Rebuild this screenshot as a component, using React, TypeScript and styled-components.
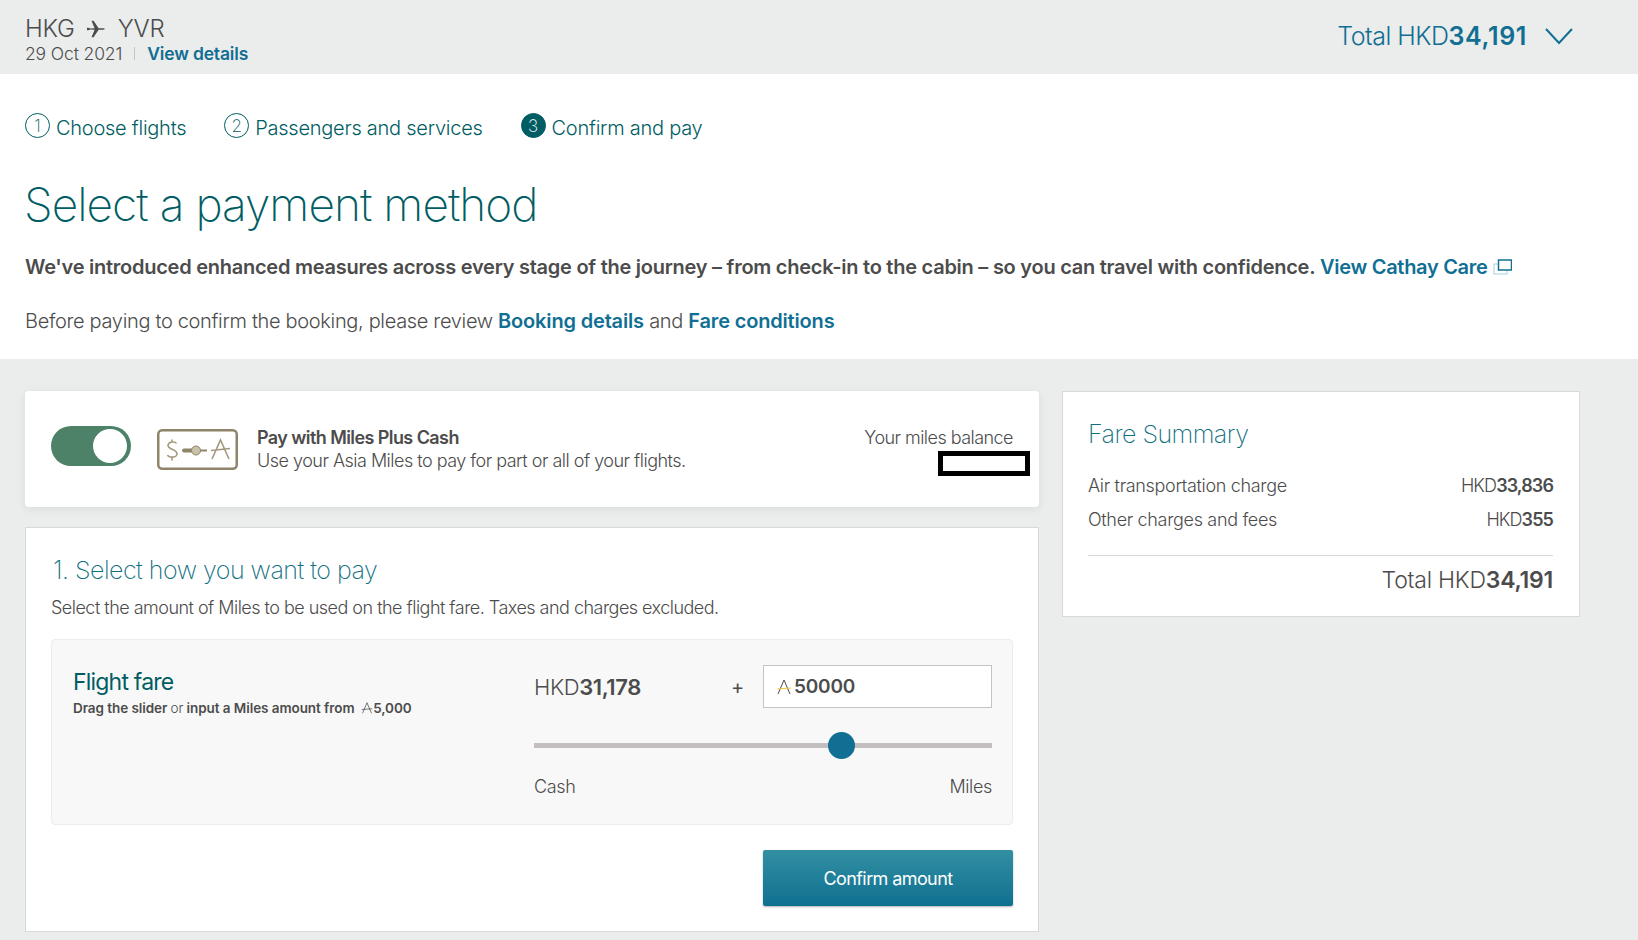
import React from 'react'
import styled, { createGlobalStyle } from 'styled-components'

const GlobalStyle = createGlobalStyle`
  html, body { margin: 0; padding: 0; background: #ebecec; }
  body { font-family: "Inter", "Liberation Sans", sans-serif; color: #4c4c4c; }
  * { box-sizing: border-box; }
`

const Page = styled.div`
  width: 1638px;
  height: 940px;
  overflow: hidden;
  background: #ebecec;
`

const TopBar = styled.header`
  height: 74px;
  padding: 15px 65px 0 25px;
  display: flex;
  justify-content: space-between;
  background: #ebecec;
`

const Route = styled.div`
  display: flex;
  align-items: center;
  gap: 11.5px;
  height: 27px;
  font-size: 24px;
  font-weight: 300;
  letter-spacing: -0.2px;
`

const DateRow = styled.div`
  display: flex;
  align-items: center;
  margin-top: 1px;
  font-size: 17.5px;
  font-weight: 300;
  letter-spacing: -0.12px;
`

const Pipe = styled.span`
  width: 1px;
  height: 13px;
  margin: 0 12px;
  background: #c4c4c4;
`

const Link = styled.a`
  color: #106f93;
  font-weight: 600;
  letter-spacing: -0.17px;
`

const TotalToggle = styled.div`
  display: flex;
  align-items: center;
  gap: 18px;
  height: 42px;
  color: #106f93;
  font-size: 25px;
  font-weight: 300;
  letter-spacing: -0.5px;
  b { font-weight: 600; letter-spacing: 0.65px; }
`

const Intro = styled.section`
  height: 285px;
  padding: 41px 25px 0;
  background: #fff;
`

const Steps = styled.ol`
  display: flex;
  gap: 38px;
  margin: 0;
  padding: 0;
  list-style: none;
`

const Step = styled.li`
  display: flex;
  align-items: center;
  gap: 6px;
  height: 25px;
  color: #005d63;
  font-size: 20px;
  font-weight: 300;
  letter-spacing: -0.25px;
`

const StepNumber = styled.span<{ $active?: boolean }>`
  display: flex;
  align-items: center;
  justify-content: center;
  width: 25px;
  height: 25px;
  margin-top: -4px;
  border: 1px solid #005d63;
  border-radius: 50%;
  font-size: 17px;
  font-weight: 200;
  letter-spacing: 0;
  color: ${(p) => (p.$active ? '#fff' : '#005d63')};
  background: ${(p) => (p.$active ? '#005d63' : 'transparent')};
`

const Heading = styled.h1`
  margin: 35px 0 0 -1px;
  color: #005d63;
  font-size: 46px;
  line-height: 58px;
  font-weight: 250;
  letter-spacing: -0.96px;
`

const Notice = styled.p`
  display: flex;
  align-items: center;
  margin: 21px 0 0;
  font-size: 20px;
  line-height: 26px;
  font-weight: 600;
  letter-spacing: -0.255px;
  a { letter-spacing: -0.3px; }
`

const Review = styled.p`
  margin: 28px 0 0;
  font-size: 20px;
  line-height: 26px;
  font-weight: 300;
  letter-spacing: -0.33px;
`

const Content = styled.main`
  display: grid;
  grid-template-columns: 1014px 518px;
  gap: 23px;
  padding: 32px 0 0 25px;
  align-items: start;
`

const LeftColumn = styled.div`
  display: flex;
  flex-direction: column;
  gap: 20px;
`

const MilesCard = styled.div`
  display: flex;
  align-items: center;
  height: 116px;
  padding: 0 9px 0 26px;
  background: #fff;
  border-radius: 4px;
  box-shadow: 0 2px 10px rgba(0, 0, 0, 0.08);
`

const Toggle = styled.div`
  position: relative;
  flex: none;
  width: 80px;
  height: 40px;
  margin-bottom: 6px;
  border-radius: 20px;
  background: #4d8269;
  &::after {
    content: '';
    position: absolute;
    top: 3px;
    right: 4px;
    width: 34px;
    height: 34px;
    border-radius: 50%;
    background: #fff;
  }
`

const MilesText = styled.div`
  flex: 1;
  margin: 0 0 0 19px;
  font-size: 18px;
  line-height: 23px;
  font-weight: 300;
  letter-spacing: -0.51px;
  strong { display: block; font-weight: 600; letter-spacing: -0.58px; }
`

const Balance = styled.div`
  display: flex;
  flex-direction: column;
  align-items: flex-end;
  margin-top: 3px;
  font-size: 18px;
  line-height: 24px;
  font-weight: 300;
  letter-spacing: -0.54px;
  span { margin: 0 17px 1px 0; }
`

const BalanceMask = styled.div`
  width: 92px;
  height: 25px;
  border: 5px solid #000;
  background: #fff;
`

const PayCard = styled.section`
  height: 405px;
  padding: 26px 25px 0 25px;
  background: #fff;
  border: 1px solid #d8d8d8;
`

const SectionTitle = styled.h2`
  margin: 0 0 0 2px;
  color: #106f7f;
  font-size: 25px;
  line-height: 32px;
  font-weight: 250;
  letter-spacing: -0.5px;
`

const SectionHint = styled.p`
  margin: 10px 0 0;
  font-size: 18px;
  line-height: 24px;
  font-weight: 300;
  letter-spacing: -0.52px;
`

const FarePanel = styled.div`
  display: grid;
  grid-template-columns: 461px 458px;
  height: 186px;
  margin-top: 19px;
  padding: 25px 0 0 21px;
  background: #f8f8f8;
  border: 1px solid #ececec;
  border-radius: 4px;
`

const FareTitle = styled.h3`
  margin: 1px 0 0;
  color: #005d63;
  font-size: 23px;
  line-height: 32px;
  font-weight: 400;
  letter-spacing: -0.8px;
`

const FareHint = styled.p`
  display: flex;
  align-items: center;
  margin: 1px 0 0;
  font-size: 13.5px;
  line-height: 18px;
  font-weight: 600;
  letter-spacing: -0.07px;
  white-space: pre;
  span { font-weight: 300; }
`

const AmountRow = styled.div`
  display: flex;
  align-items: center;
  height: 43px;
  font-size: 22px;
  font-weight: 300;
  letter-spacing: -0.4px;
  b { font-weight: 600; }
`

const Cash = styled.div`
  width: 197px;
`

const Plus = styled.span`
  width: 32px;
  font-size: 20px;
  font-weight: 400;
`

const MilesInput = styled.div`
  display: flex;
  align-items: center;
  gap: 2px;
  flex: 1;
  height: 43px;
  padding-left: 12px;
  background: #fff;
  border: 1px solid #c4c4c4;
  font-size: 19px;
  font-weight: 600;
  letter-spacing: -0.2px;
`

const SliderTrack = styled.div`
  position: relative;
  height: 5px;
  margin-top: 35px;
  background: #c3bfc0;
`

const SliderThumb = styled.div`
  position: absolute;
  top: -11px;
  width: 27px;
  height: 27px;
  border-radius: 50%;
  background: #106f93;
`

const SliderLabels = styled.div`
  display: flex;
  justify-content: space-between;
  margin-top: 27px;
  font-size: 18px;
  line-height: 24px;
  font-weight: 300;
  letter-spacing: -0.35px;
`

const ButtonRow = styled.div`
  display: flex;
  justify-content: flex-end;
  margin-top: 25px;
`

const ConfirmButton = styled.button`
  width: 250px;
  height: 56px;
  padding: 1px 0 0;
  border: 0;
  border-radius: 2px;
  color: #fff;
  font: 400 18px "Inter", "Liberation Sans", sans-serif;
  letter-spacing: -0.6px;
  background: linear-gradient(#328fa3, #0f7090);
  box-shadow: 0 1px 2px rgba(0, 0, 0, 0.3);
`

const SummaryCard = styled.aside`
  height: 226px;
  padding: 26px 26px 0 25px;
  background: #fff;
  border: 1px solid #d8d8d8;
`

const SummaryTitle = styled.h2`
  margin: 0 0 19px;
  color: #106f7f;
  font-size: 25px;
  line-height: 32px;
  font-weight: 250;
  letter-spacing: -0.55px;
`

const SummaryRow = styled.div`
  display: flex;
  justify-content: space-between;
  height: 33.5px;
  font-size: 18px;
  line-height: 33px;
  font-weight: 300;
  letter-spacing: -0.33px;
  b { font-weight: 600; }
`

const SummaryValue = styled.span`
  letter-spacing: -0.9px;
`

const SummaryTotal = styled.div`
  margin-top: 19px;
  padding-top: 8px;
  border-top: 1px solid #d8d8d8;
  text-align: right;
  font-size: 23px;
  line-height: 32px;
  font-weight: 300;
  letter-spacing: -0.24px;
  b { font-weight: 600; }
`

function PlaneIcon() {
  return (
    <svg width="20" height="20" viewBox="0 0 20 20" fill="#4c4c4c">
      <path d="M1 8.8 L2.2 8.8 L4.5 9.6 L8.6 9.3 L5.5 1.8 L7.6 1.8 L12.6 9.2 L17 9.2 C19.4 9.4 19.4 10.6 17 10.8 L12.6 10.8 L7.6 18.2 L5.5 18.2 L8.6 10.7 L4.5 10.4 L2.2 11.2 L1 11.2 Z" />
    </svg>
  )
}

function ChevronIcon() {
  return (
    <svg width="28" height="17" viewBox="0 0 28 17" fill="none" stroke="#106f93" strokeWidth="2">
      <path d="M1 1 L14 15 L27 1" />
    </svg>
  )
}

function ExternalIcon() {
  return (
    <svg width="19" height="16" viewBox="0 0 19 16" fill="none" style={{ marginLeft: 5 }}>
      <rect x="1" y="5" width="13" height="10" stroke="#a9cfdc" />
      <rect x="5.5" y="1" width="13" height="10" fill="#fff" stroke="#106f93" strokeWidth="1.5" />
    </svg>
  )
}

function MilesMark({ size = 16, accent }: { size?: number; accent?: boolean }) {
  return (
    <svg width={size} height={size} viewBox="0 0 16 16" fill="none" stroke="#4c4c4c" strokeWidth="1">
      <path d="M2 15 L8 1 L14 15" />
      <path d="M1 10 L15 9" stroke={accent ? '#f0c93c' : '#4c4c4c'} />
    </svg>
  )
}

function MilesCashIcon() {
  return (
    <svg width="81" height="41" viewBox="0 0 81 41" fill="none" style={{ marginLeft: 26, flex: 'none' }}>
      <rect x="1.25" y="1.25" width="78.5" height="38.5" rx="4" stroke="#8f8468" strokeWidth="2.5" />
      <path
        d="M19.5 14.5 C18.5 12.5 12 12 11 16 C10.5 21 20 19.5 20 25 C19.5 29 12 29 10.5 26 M15 10.5 V13 M15 28 V31.5"
        stroke="#a39a7e"
        strokeWidth="1.6"
      />
      <path d="M27 21.5 H37" stroke="#8f8468" strokeWidth="4" strokeLinecap="round" />
      <path d="M42 21.5 H50" stroke="#8f8468" strokeWidth="2" />
      <circle cx="39" cy="21.5" r="4.5" fill="#c9c2a8" stroke="#8f8468" />
      <path d="M55 30 L63.5 11 L72 30 M54 21.5 L73 19.5" stroke="#a39a7e" strokeWidth="1.6" />
    </svg>
  )
}

export default function App() {
  return (
    <Page>
      <GlobalStyle />
      <TopBar>
        <div>
          <Route>
            <span>HKG</span>
            <PlaneIcon />
            <span>YVR</span>
          </Route>
          <DateRow>
            29 Oct 2021
            <Pipe />
            <Link>View details</Link>
          </DateRow>
        </div>
        <TotalToggle>
          <span>
            Total HKD<b>34,191</b>
          </span>
          <ChevronIcon />
        </TotalToggle>
      </TopBar>

      <Intro>
        <Steps>
          <Step>
            <StepNumber>1</StepNumber>
            Choose flights
          </Step>
          <Step>
            <StepNumber>2</StepNumber>
            Passengers and services
          </Step>
          <Step>
            <StepNumber $active>3</StepNumber>
            Confirm and pay
          </Step>
        </Steps>
        <Heading>Select a payment method</Heading>
        <Notice>
          We've introduced enhanced measures across every stage of the journey – from check-in to the cabin – so you
          can travel with confidence.&nbsp;<Link>View Cathay Care</Link>
          <ExternalIcon />
        </Notice>
        <Review>
          Before paying to confirm the booking, please review <Link>Booking details</Link> and{' '}
          <Link>Fare conditions</Link>
        </Review>
      </Intro>

      <Content>
        <LeftColumn>
          <MilesCard>
            <Toggle />
            <MilesCashIcon />
            <MilesText>
              <strong>Pay with Miles Plus Cash</strong>
              Use your Asia Miles to pay for part or all of your flights.
            </MilesText>
            <Balance>
              <span>Your miles balance</span>
              <BalanceMask />
            </Balance>
          </MilesCard>

          <PayCard>
            <SectionTitle>1. Select how you want to pay</SectionTitle>
            <SectionHint>Select the amount of Miles to be used on the flight fare. Taxes and charges excluded.</SectionHint>
            <FarePanel>
              <div>
                <FareTitle>Flight fare</FareTitle>
                <FareHint>
                  Drag the slider <span>or</span> input a Miles amount from{'  '}
                  <MilesMark size={12} />
                  5,000
                </FareHint>
              </div>
              <div>
                <AmountRow>
                  <Cash>
                    HKD<b>31,178</b>
                  </Cash>
                  <Plus>+</Plus>
                  <MilesInput>
                    <MilesMark size={16} accent />
                    50000
                  </MilesInput>
                </AmountRow>
                <SliderTrack>
                  <SliderThumb style={{ left: `${(50000 / 75000) * 100 - 2.4}%` }} />
                </SliderTrack>
                <SliderLabels>
                  <span>Cash</span>
                  <span>Miles</span>
                </SliderLabels>
              </div>
            </FarePanel>
            <ButtonRow>
              <ConfirmButton>Confirm amount</ConfirmButton>
            </ButtonRow>
          </PayCard>
        </LeftColumn>

        <SummaryCard>
          <SummaryTitle>Fare Summary</SummaryTitle>
          <SummaryRow>
            <span>Air transportation charge</span>
            <SummaryValue>
              HKD<b>33,836</b>
            </SummaryValue>
          </SummaryRow>
          <SummaryRow>
            <span>Other charges and fees</span>
            <SummaryValue>
              HKD<b>355</b>
            </SummaryValue>
          </SummaryRow>
          <SummaryTotal>
            Total HKD<b>34,191</b>
          </SummaryTotal>
        </SummaryCard>
      </Content>
    </Page>
  )
}
